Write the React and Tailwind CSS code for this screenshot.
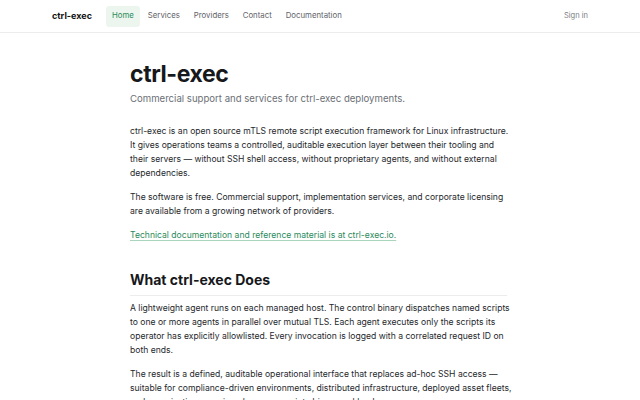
import React from 'react';

const navItems = ['Home', 'Services', 'Providers', 'Contact', 'Documentation'];

export default function App() {
    return (
        <div className="min-h-screen bg-white text-[#1f2328]" style={{ fontFamily: 'Inter, "Noto Sans", sans-serif' }}>
            {/* Header */}
            <header className="h-[33px] border-b border-[#ececec] flex items-center px-[52px]">
                <div className="text-[9px] font-bold text-[#111] mr-[14px]">ctrl-exec</div>
                <nav className="flex items-center gap-[2px]">
                    {navItems.map((item, i) => (
                        <a
                            key={item}
                            className={`px-[6px] h-[21px] flex items-center rounded-[3px] text-[7.8px] ${i === 0 ? 'bg-[#ecf6ef] text-[#2b8a5c]' : 'text-[#5f636a]'}`}
                        >
                            {item}
                        </a>
                    ))}
                </nav>
                <a className="ml-auto text-[7.5px] text-[#7a7d83]">Sign in</a>
            </header>

            {/* Content */}
            <main className="max-w-[394px] mx-auto pl-[7px] pr-[3px] pt-[27px]">
                <h1 className="text-[23px] font-bold leading-[28px] tracking-[-0.4px] text-[#16181b]">ctrl-exec</h1>
                <p className="mt-[4px] text-[9.6px] leading-[14px] text-[#6b6f76]">Commercial support and services for ctrl-exec deployments.</p>

                <div className="mt-[18px] text-[8.6px] leading-[14px] text-[#25282c] space-y-[10px]">
                    <p>
                        ctrl-exec is an open source mTLS remote script execution framework for Linux infrastructure.
                        It gives operations teams a controlled, auditable execution layer between their tooling and
                        their servers — without SSH shell access, without proprietary agents, and without external
                        dependencies.
                    </p>
                    <p>
                        The software is free. Commercial support, implementation services, and corporate licensing
                        are available from a growing network of providers.
                    </p>
                    <p>
                        <a className="text-[#2b8a5c] underline decoration-[#a8d5bc] underline-offset-2">
                            Technical documentation and reference material is at ctrl-exec.io.
                        </a>
                    </p>
                </div>

                <h2 className="mt-[29px] mr-[7px] pb-[6px] border-b border-[#ececec] text-[14px] font-bold leading-[18px] text-[#16181b]">What ctrl-exec Does</h2>

                <div className="mt-[5px] text-[8.6px] leading-[14px] text-[#25282c] space-y-[10px]">
                    <p>
                        A lightweight agent runs on each managed host. The control binary dispatches named scripts
                        to one or more agents in parallel over mutual TLS. Each agent executes only the scripts its
                        operator has explicitly allowlisted. Every invocation is logged with a correlated request ID on
                        both ends.
                    </p>
                    <p>
                        The result is a defined, auditable operational interface that replaces ad-hoc SSH access —
                        suitable for compliance-driven environments, distributed infrastructure, deployed asset fleets,
                        and organisations running always-on script-driven workloads.
                    </p>
                </div>
            </main>
        </div>
    );
}
